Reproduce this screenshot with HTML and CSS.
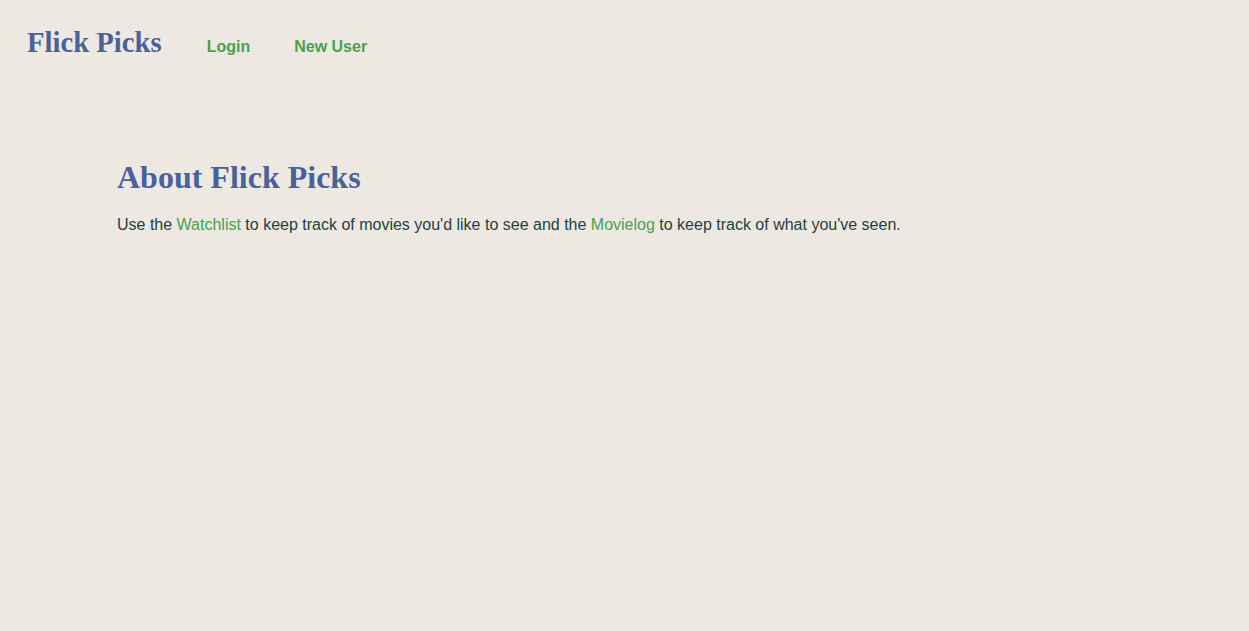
FILE: index.html
```html
<!DOCTYPE html>
<html>
<head>
<meta charset="utf-8">
<link rel="stylesheet" href="styles.css">
</head>
<body>
<header class="topbar">
  <a class="brand" href="#">Flick Picks</a>
  <nav class="nav">
    <a class="nav-link" href="#">Login</a>
    <a class="nav-link" href="#">New User</a>
  </nav>
</header>
<main class="content">
  <h1 class="title">About Flick Picks</h1>
  <p class="intro">Use the <a class="inline-link" href="#">Watchlist</a> to keep track of movies you'd like to see and the <a class="inline-link" href="#">Movielog</a> to keep track of what you've seen.</p>
</main>
</body>
</html>
```

FILE: styles.css
```css
html, body {
  margin: 0;
  padding: 0;
  background: #ede9e2;
  height: 100%;
}
body {
  font-family: "Liberation Sans", Arial, sans-serif;
  font-size: 16px;
  color: #26403c;
}
.topbar {
  display: flex;
  align-items: baseline;
  padding: 26px 27px 24px;
}
.brand {
  font-family: "Liberation Serif", "Times New Roman", serif;
  font-weight: bold;
  font-size: 28.7px;
  color: #4a6199;
  text-decoration: none;
}
.nav {
  display: flex;
  gap: 44px;
  margin-left: 45px;
}
.nav-link {
  font-weight: bold;
  color: #4aa04e;
  text-decoration: none;
}
.content {
  padding: 76px 117px;
}
.title {
  font-family: "Liberation Serif", "Times New Roman", serif;
  font-size: 32px;
  font-weight: bold;
  color: #4a6199;
  margin: 0 0 19px;
}
.intro {
  margin: 0;
  line-height: 1.2;
}
.inline-link {
  color: #4aa04e;
  text-decoration: none;
}
```
